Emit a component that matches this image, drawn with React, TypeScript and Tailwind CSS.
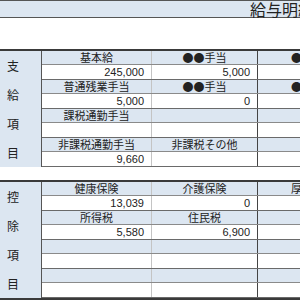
import React from "react";

type Cell = { h: string; v?: string };
type Row = Cell[];

const font = { fontFamily: '"Liberation Sans", "Noto Sans CJK JP", sans-serif' };
const cjk = { fontFamily: '"Noto Sans CJK JP", sans-serif' };

function Table({ side, rows }: { side: string[]; rows: Row[] }) {
  return (
    <div className="w-[420px] border-t-2 border-[#3a3a3a] flex">
      <div className="w-[42px] shrink-0 bg-[#dce6f1] border-r border-[#555] flex flex-col">
        {side.map((c, i) => (
          <div key={i} className="h-[29px] flex items-center pl-[7px] text-[12px] text-[#222]" style={cjk}>
            {c}
          </div>
        ))}
      </div>
      <div className="flex flex-col">
        {rows.map((row, ri) => (
          <React.Fragment key={ri}>
            <div className="flex h-[14px] bg-[#dce6f1] border-b border-[#8a8a8a]">
              {row.map((c, ci) => (
                <div
                  key={ci}
                  style={cjk}
                  className={
                    "flex items-center justify-center text-[11px] leading-none text-[#222] whitespace-nowrap " +
                    (ci === 0 ? "w-[110px] border-r border-[#c4c4c4]" : ci === 1 ? "w-[106px] border-r border-[#444]" : "w-[110px]")
                  }
                >
                  {c.h}
                </div>
              ))}
            </div>
            <div className="flex h-[15px] bg-white border-b border-[#6a6a6a]">
              {row.map((c, ci) => (
                <div
                  key={ci}
                  className={
                    "flex items-center justify-end pr-[7px] text-[11px] leading-none text-[#222] " +
                    (ci === 0 ? "w-[110px] border-r border-[#c4c4c4]" : ci === 1 ? "w-[106px] border-r border-[#444]" : "w-[110px]")
                  }
                >
                  {c.v ?? ""}
                </div>
              ))}
            </div>
          </React.Fragment>
        ))}
      </div>
    </div>
  );
}

export default function App() {
  const pay: Row[] = [
    [{ h: "基本給", v: "245,000" }, { h: "●●手当", v: "5,000" }, { h: "●●手当" }],
    [{ h: "普通残業手当", v: "5,000" }, { h: "●●手当", v: "0" }, { h: "●●手当" }],
    [{ h: "課税通勤手当" }, { h: "" }, { h: "" }],
    [{ h: "非課税通勤手当", v: "9,660" }, { h: "非課税その他" }, { h: "" }],
  ];
  const ded: Row[] = [
    [{ h: "健康保険", v: "13,039" }, { h: "介護保険", v: "0" }, { h: "厚生年金" }],
    [{ h: "所得税", v: "5,580" }, { h: "住民税", v: "6,900" }, { h: "" }],
    [{ h: "" }, { h: "" }, { h: "" }],
    [{ h: "" }, { h: "" }, { h: "" }],
  ];
  return (
    <div className="w-[300px] h-[300px] overflow-hidden bg-white" style={font}>
      <div className="w-[420px] border-t border-[#555] bg-[#dce6f1] h-[18px] border-b border-[#555] flex items-center">
        <span className="ml-[250px] text-[16px] leading-none text-[#222] whitespace-nowrap" style={cjk}>給与明細書</span>
      </div>
      <div className="h-[31px]" />
      <Table side={["支", "給", "項", "目"]} rows={pay} />
      <div className="h-[13px]" />
      <Table side={["控", "除", "項", "目"]} rows={ded} />
      <div className="w-[420px] border-t-2 border-[#3a3a3a]" />
    </div>
  );
}
